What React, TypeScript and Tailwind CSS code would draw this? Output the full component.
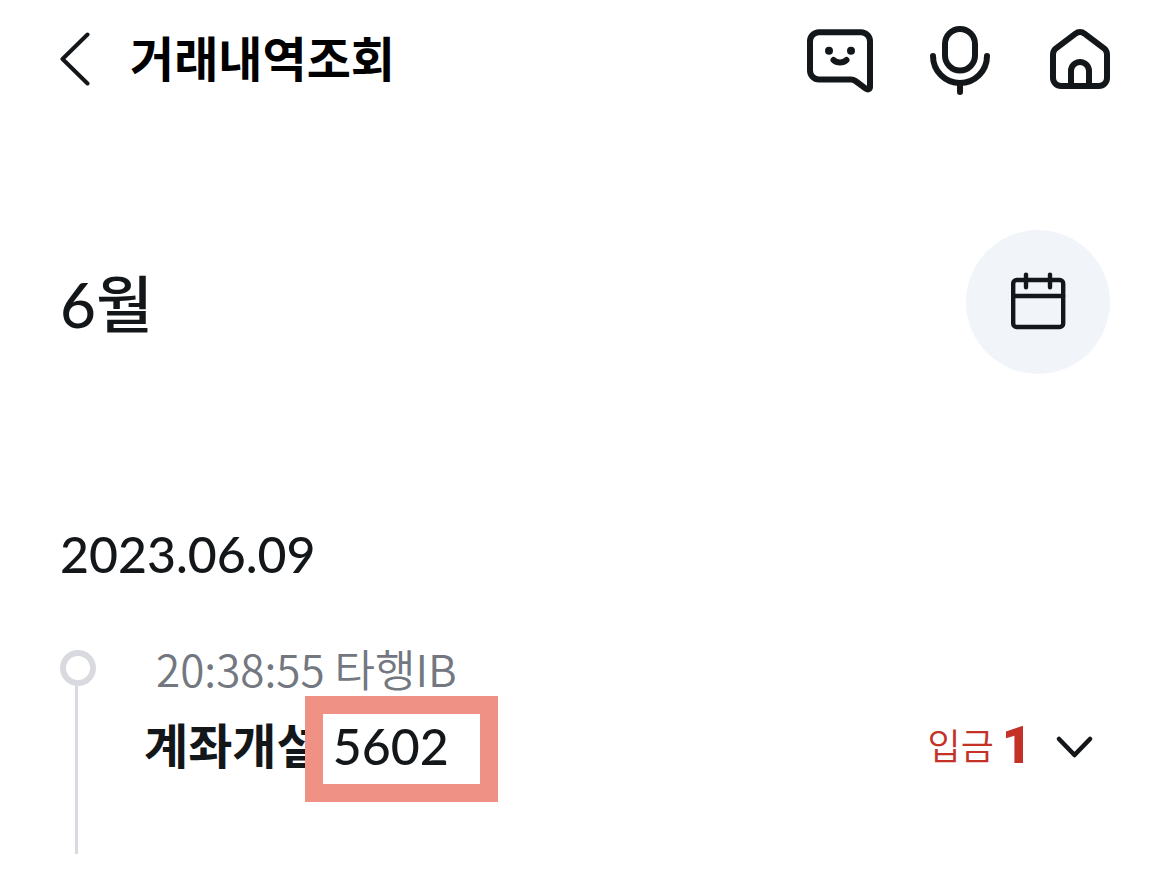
import type { ReactNode } from 'react';

interface Transaction {
    time: string;
    channel: string;
    title: string;
    code: string;
    type: string;
    amount: number;
}

const transactions: Transaction[] = [
    { time: '20:38:55', channel: '타행IB', title: '계좌개설', code: '5602', type: '입금', amount: 1 },
];

function Icon({ children, strokeWidth = 6 }: { children: ReactNode; strokeWidth?: number }) {
    return (
        <svg
            viewBox="0 0 72 72"
            className="size-18"
            fill="none"
            stroke="currentColor"
            strokeWidth={strokeWidth}
            strokeLinecap="round"
            strokeLinejoin="round"
            aria-hidden="true"
        >
            {children}
        </svg>
    );
}

function Header() {
    return (
        <header className="flex h-30 items-center justify-between pl-15 pr-[53px]">
            <div className="flex items-center gap-10 pb-0.5">
                <button type="button" aria-label="뒤로">
                    <svg viewBox="0 0 30 54" className="h-[54px] w-[30px]" fill="none" stroke="currentColor" strokeWidth="4" strokeLinecap="round" strokeLinejoin="round">
                        <path d="M27.5 2.500 2.5 27l25 24.5" />
                    </svg>
                </button>
                <h1 className="text-[48px] leading-[72px] font-bold text-black">거래내역조회</h1>
            </div>
            <nav className="flex items-center gap-12">
                <button type="button" aria-label="챗봇">
                    <Icon>
                        <path d="M15 8.200h42a9 9 0 0 1 9 9v45.500c0 2.400-2 3.400-3.900 2.100L51.500 57c-1.600-1.100-2.400-1.500-4.500-1.500H15a9 9 0 0 1-9-9V17.200a9 9 0 0 1 9-9z" />
                        <path d="M29.500 36c3.500 3.200 9.500 3.200 13 0" />
                        <circle cx="25" cy="26.700" r="4" fill="currentColor" stroke="none" />
                        <circle cx="47" cy="26.700" r="4" fill="currentColor" stroke="none" />
                    </Icon>
                </button>
                <button type="button" aria-label="음성">
                    <Icon>
                        <rect x="21" y="5" width="30" height="41.5" rx="15" />
                        <path d="M9 32a27 27 0 0 0 54 0M36 60v8" />
                    </Icon>
                </button>
                <button type="button" aria-label="홈">
                    <Icon>
                        <path d="M9 30.500c0-2.500 1-4.500 3-6.200L31.500 9.700a7 7 0 0 1 9 0L60 24.300c2 1.700 3 3.700 3 6.200V54a8 8 0 0 1-8 8H17a8 8 0 0 1-8-8z" />
                        <path d="M27 62V47a9 9 0 0 1 18 0v15" />
                    </Icon>
                </button>
            </nav>
        </header>
    );
}

function TransactionItem({ item }: { item: Transaction }) {
    return (
        <li className="flex h-[204px]">
            <div className="flex w-9 flex-col items-center">
                <span className="size-9 shrink-0 rounded-full border-6 border-[#d9dae0]" />
                <span className="mr-[3px] w-[3px] grow bg-[#d9dae0]" />
            </div>
            <div className="ml-12 min-w-0 grow">
                <p className="-mt-3 pl-3 font-['Noto_Sans_CJK_KR',sans-serif] text-[44px] leading-[60px] font-[350] text-[#73777f]">
                    {item.time} {item.channel}
                </p>
                <div className="mt-3 flex items-center justify-between text-[48px] leading-[72px]">
                    <p className="flex font-bold">
                        {item.title}
                        <span className="relative ml-3 text-[50px] font-medium">
                            {item.code}
                            {/* highlight around the verification code */}
                            <span className="absolute -top-3.5 -left-7 h-[106px] w-[193px] border-18 border-[#f09186]" />
                        </span>
                    </p>
                    <button type="button" className="flex items-center pr-4 text-[#c33127]" aria-label="상세 보기">
                        <span className="text-[36px] font-[350]">{item.type}</span>
                        <span className="ml-2 font-[Roboto,sans-serif] text-[52px] font-black">{item.amount}</span>
                        <svg viewBox="0 0 42 30" className="ml-5 h-[30px] w-[42px] text-[#14171a]" fill="none" stroke="currentColor" strokeWidth="4.6" strokeLinecap="round" strokeLinejoin="round">
                            <path d="M7 8l15.500 16L38 8" />
                        </svg>
                    </button>
                </div>
            </div>
        </li>
    );
}

export default function App() {
    return (
        <div className="min-h-screen overflow-hidden bg-white font-[Lato,'Noto_Sans_CJK_KR',sans-serif] text-[#14171a]">
            <Header />
            <main className="pl-15 pr-[59px]">
                <div className="mt-[110px] flex items-center justify-between">
                    <h2 className="pt-1 text-[62px] leading-[72px] font-medium">6월</h2>
                    <button type="button" aria-label="날짜 선택" className="flex size-36 items-center justify-center rounded-full bg-[#f1f5fa]">
                        <Icon strokeWidth={4.4}>
                            <rect x="11.200" y="14" width="50" height="47" rx="3.500" />
                            <path d="M11.200 30h50M24 8.600v12.600M48 8.600v12.600" />
                        </Icon>
                    </button>
                </div>
                <h3 className="mt-36 text-[50px] leading-[72px] font-medium">2023.06.09</h3>
                <ul className="mt-15">
                    {transactions.map((item) => (
                        <TransactionItem key={item.time} item={item} />
                    ))}
                </ul>
            </main>
        </div>
    );
}
